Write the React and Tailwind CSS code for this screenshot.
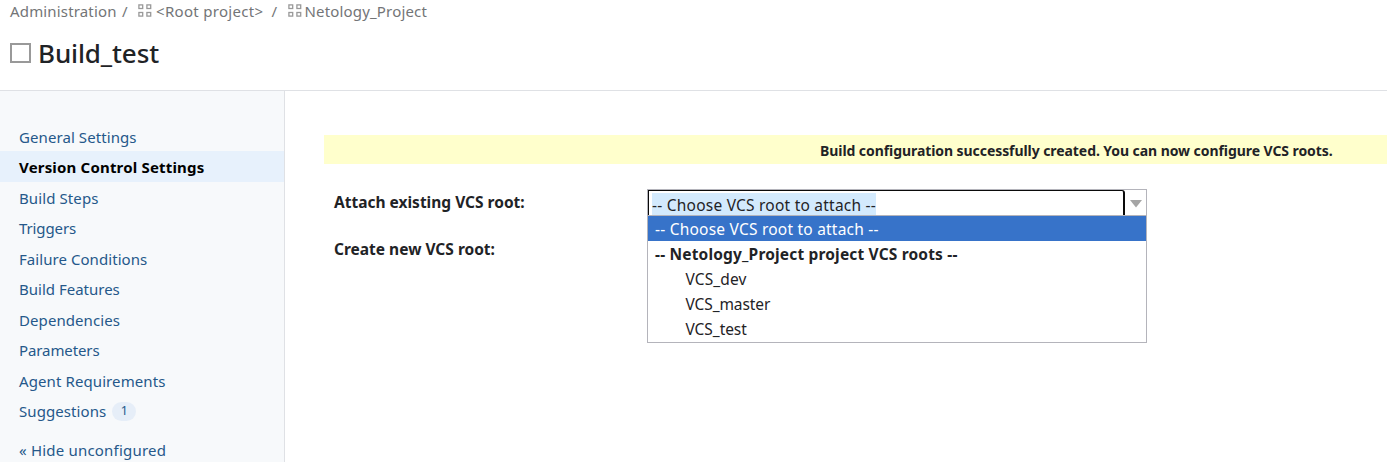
const navItems = [
  { label: "General Settings", spacing: "tracking-[0.08px]" },
  { label: "Version Control Settings", spacing: "tracking-[0.18px]", active: true },
  { label: "Build Steps", spacing: "tracking-[0.1px]" },
  { label: "Triggers", spacing: "tracking-[-0.1px]" },
  { label: "Failure Conditions", spacing: "tracking-[0.06px]" },
  { label: "Build Features", spacing: "tracking-normal" },
  { label: "Dependencies", spacing: "tracking-[0.08px]" },
  { label: "Parameters", spacing: "tracking-[-0.1px]" },
  { label: "Agent Requirements", spacing: "tracking-[0.1px]" },
  { label: "Suggestions", spacing: "tracking-[0.08px]", count: 1 },
];

const roots = [
  { label: "VCS_dev", spacing: "tracking-[0.12px]" },
  { label: "VCS_master", spacing: "tracking-[-0.1px]" },
  { label: "VCS_test", spacing: "tracking-[-0.05px]" },
];

function ProjectIcon() {
  return (
    <svg className="-mt-px h-[13px] w-[14px] shrink-0" viewBox="0 0 14 13" fill="none" stroke="#999" strokeWidth="1.3">
      <rect x="0.9" y="0.9" width="3.8" height="3.6" />
      <rect x="8.9" y="0.9" width="3.8" height="3.6" />
      <rect x="0.9" y="8.5" width="3.8" height="3.6" />
      <rect x="8.9" y="8.5" width="3.8" height="3.6" />
    </svg>
  );
}

function Breadcrumbs() {
  return (
    <nav className="flex h-[22px] items-center pl-[10px] text-[15px] leading-[22px] whitespace-nowrap text-[#737577]">
      <span className="w-[112px] tracking-[0.16px]">Administration</span>
      <span className="w-[15.5px]">/</span>
      <ProjectIcon />
      <span className="ml-[4.5px] w-[115.5px] tracking-[0.3px]">&lt;Root project&gt;</span>
      <span className="w-[16px]">/</span>
      <ProjectIcon />
      <span className="ml-[3px] tracking-[0.17px]">Netology_Project</span>
    </nav>
  );
}

function Sidebar() {
  return (
    <aside className="w-[285px] shrink-0 border-r border-[#dfe1e5] bg-[#f7f9fb] pt-[29.5px] text-[15px] text-[#25588a]">
      <ul>
        {navItems.map(({ label, spacing, active, count }) => (
          <li
            key={label}
            className={`flex h-[30.5px] items-center pt-[2px] pl-[19px] whitespace-nowrap ${spacing} ${
              active ? "bg-[#e7f1fc] font-bold text-black" : ""
            }`}
          >
            {label}
            {count && (
              <span className="ml-[6px] flex h-[19px] w-6 items-center justify-center rounded-full bg-[#e6eef8] text-[12.5px] tracking-normal">
                {count}
              </span>
            )}
          </li>
        ))}
      </ul>
      <div className="mt-[8.5px] flex h-[30.5px] items-center pt-[2px] pl-[19px] tracking-[0.2px]">« Hide unconfigured</div>
    </aside>
  );
}

function RootSelect() {
  return (
    <div className="relative h-[27px] w-[500px] border border-[#b4b4bb] bg-white text-[15.5px] text-[#1f2326]">
      <div className="flex h-full">
        <div className="flex w-[477px] rounded-tr-[3px] border-t border-r-2 border-l border-[#0a0a0a] pl-[3px]">
          <span className="mt-[2px] h-[23px] w-[224px] bg-[#d3eafd] text-[15.5px] leading-[25px] tracking-[0.23px] whitespace-nowrap">
            -- Choose VCS root to attach --
          </span>
        </div>
        <div className="flex flex-1 justify-center">
          <svg className="mt-[10px] h-[8px] w-[12px]" viewBox="0 0 12 8" fill="#a5a5a5">
            <path d="M0 0h12L6 7.5z" />
          </svg>
        </div>
      </div>
      <ul className="absolute top-[25px] -left-px w-[500px] border border-[#b4b4bb] bg-white leading-[25px] whitespace-nowrap">
        <li className="h-[25px] bg-[#3773c9] pl-[7px] leading-[27px] tracking-[0.22px] text-white">
          -- Choose VCS root to attach --
        </li>
        <li className="h-[25px] pl-[7px] leading-[26px] font-bold tracking-[0.17px]">-- Netology_Project project VCS roots --</li>
        {roots.map(({ label, spacing }) => (
          <li key={label} className={`h-[25px] pl-[37.5px] leading-[26px] last:h-[26px] ${spacing}`}>
            {label}
          </li>
        ))}
      </ul>
    </div>
  );
}

export default function App() {
  return (
    <div className="flex h-[462px] w-[1387px] flex-col overflow-hidden bg-white font-['Noto_Sans',sans-serif]">
      <header className="h-[91px] shrink-0 border-b border-[#dfe1e5]">
        <Breadcrumbs />
        <h1 className="mt-[11px] flex h-10 items-center pl-[10px] text-[26px] leading-10 font-medium text-[#1f2326]">
          <span className="mr-[7px] h-5 w-[21px] border-2 border-[#999]" />
          <span className="tracking-[-0.12px]">Build_test</span>
        </h1>
      </header>
      <div className="flex min-h-0 flex-1">
        <Sidebar />
        <main className="flex-1 pt-[44px] pl-[39px] text-[#1f2326]">
          <div className="h-[29px] bg-[#ffffcc] pl-[496px] text-[14px] leading-[31px] font-bold tracking-[-0.07px] whitespace-nowrap">
            Build configuration successfully created. You can now configure VCS roots.
          </div>
          <div className="mt-[25px] flex pl-[10px]">
            <div className="w-[313px] shrink-0 text-[15.5px] leading-[27px] font-bold whitespace-nowrap">
              <div>Attach existing VCS root:</div>
              <div className="mt-5">Create new VCS root:</div>
            </div>
            <RootSelect />
          </div>
        </main>
      </div>
    </div>
  );
}
